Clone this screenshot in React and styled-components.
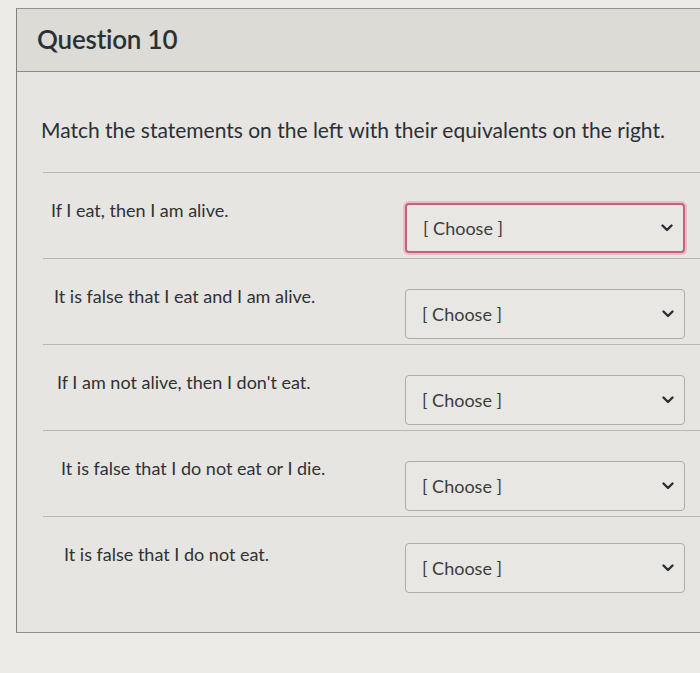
import React from "react";
import styled, { createGlobalStyle } from "styled-components";

const Global = createGlobalStyle`
  html, body {
    margin: 0;
    padding: 0;
    background: #ecebe8;
  }
  body {
    font-family: Lato, "Open Sans", sans-serif;
    color: #2e3236;
  }
`;

const Page = styled.div`
  width: 700px;
  height: 673px;
  padding-top: 8px;
  box-sizing: border-box;
`;

const Card = styled.section`
  margin-left: 16px;
  background: #e6e5e1;
  border-top: 1px solid #8f908f;
  border-left: 1px solid #7f8080;
  border-bottom: 1px solid #8f908f;
`;

const Header = styled.header`
  height: 62px;
  display: flex;
  align-items: center;
  padding-left: 20px;
  background: #dcdbd6;
  border-bottom: 1px solid #8a8b8a;
`;

const Title = styled.h2`
  margin: 0 0 2px;
  font-size: 26px;
  font-weight: 600;
  letter-spacing: -0.2px;
  color: #2b3035;
`;

const Body = styled.div`
  padding-top: 44px;
`;

const Intro = styled.p`
  margin: 0 0 28px 24px;
  font-size: 21px;
  line-height: 28px;
  color: #2b3035;
`;

const Row = styled.div`
  display: grid;
  grid-template-columns: 362px 280px;
  align-items: start;
  margin-left: 26px;
  height: 86px;
  border-top: 1px solid #b9b8b3;
  box-sizing: border-box;
`;

const Statement = styled.div`
  padding: 25px 0 0 ${(p) => p.$indent}px;
  font-size: 18px;
  line-height: 24px;
  color: #2e3236;
`;

const Select = styled.div`
  margin-top: ${(p) => p.$top}px;
  height: 50px;
  box-sizing: border-box;
  display: flex;
  align-items: center;
  justify-content: space-between;
  padding: 0 10px 0 16px;
  border-radius: 4px;
  background: #e8e7e3;
  border: ${(p) => (p.$focus ? "2px solid #c4617f" : "1px solid #adadaa")};
  box-shadow: ${(p) => (p.$focus ? "0 0 0 2px #e8bccb" : "none")};
`;

const Choose = styled.span`
  font-size: 18px;
  color: #3a3d40;
`;

const Chevron = () => (
  <svg width="12" height="8" viewBox="0 0 12 8">
    <polyline
      points="1.5,1.5 6,6 10.5,1.5"
      fill="none"
      stroke="#2b3035"
      strokeWidth="2.4"
      strokeLinecap="round"
      strokeLinejoin="round"
    />
  </svg>
);

const Tail = styled.div`
  height: 30px;
`;

const rows = [
  { text: "If I eat, then I am alive.", indent: 8, top: 30, focus: true },
  { text: "It is false that I eat and I am alive.", indent: 11, top: 30 },
  { text: "If I am not alive, then I don't eat.", indent: 14, top: 30 },
  { text: "It is false that I do not eat or I die.", indent: 18, top: 30 },
  { text: "It is false that I do not eat.", indent: 21, top: 26 },
];

export default function App() {
  return (
    <Page>
      <Global />
      <Card>
        <Header>
          <Title>Question 10</Title>
        </Header>
        <Body>
          <Intro>Match the statements on the left with their equivalents on the right.</Intro>
          {rows.map((r, i) => (
            <Row key={i}>
              <Statement $indent={r.indent}>{r.text}</Statement>
              <Select $focus={r.focus} $top={r.top}>
                <Choose>[ Choose ]</Choose>
                <Chevron />
              </Select>
            </Row>
          ))}
          <Tail />
        </Body>
      </Card>
    </Page>
  );
}
